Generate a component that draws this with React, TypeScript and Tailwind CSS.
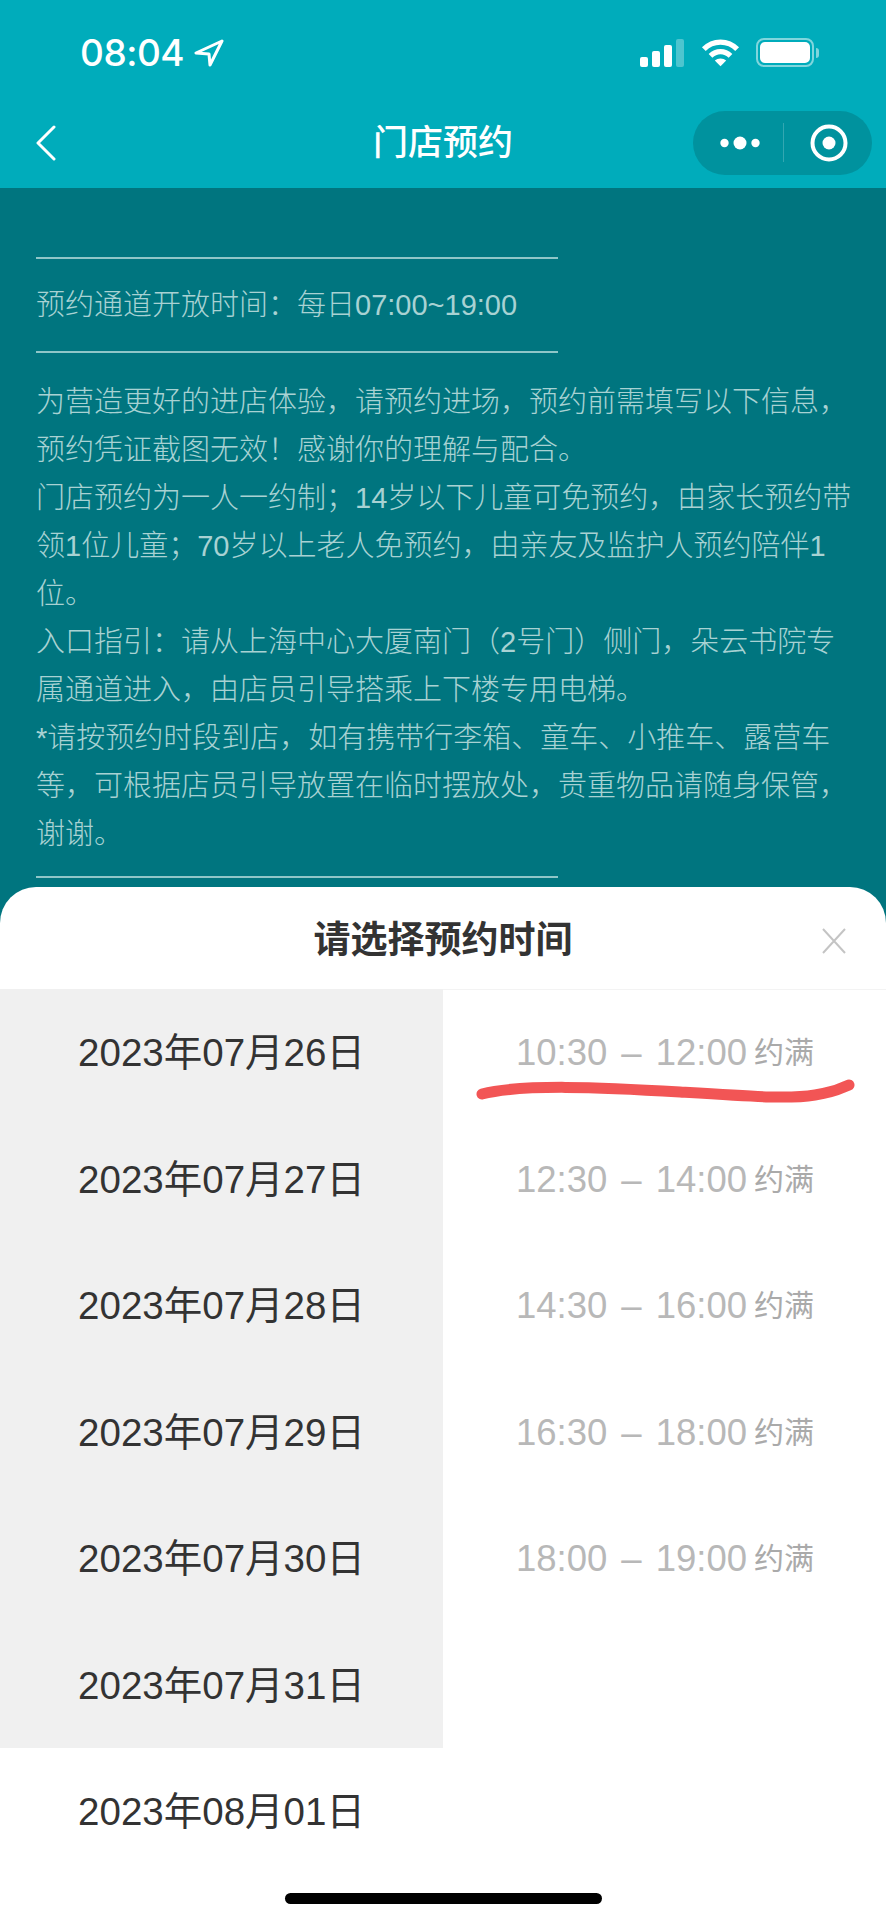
const NOTICE = [
  "为营造更好的进店体验，请预约进场，预约前需填写以下信息，",
  "预约凭证截图无效！感谢你的理解与配合。",
  "门店预约为一人一约制；14岁以下儿童可免预约，由家长预约带",
  "领1位儿童；70岁以上老人免预约，由亲友及监护人预约陪伴1",
  "位。",
  "入口指引：请从上海中心大厦南门（2号门）侧门，朵云书院专",
  "属通道进入，由店员引导搭乘上下楼专用电梯。",
  "*请按预约时段到店，如有携带行李箱、童车、小推车、露营车",
  "等，可根据店员引导放置在临时摆放处，贵重物品请随身保管，",
  "谢谢。",
];

const DATES = [
  "2023年07月26日",
  "2023年07月27日",
  "2023年07月28日",
  "2023年07月29日",
  "2023年07月30日",
  "2023年07月31日",
  "2023年08月01日",
];

const SLOTS = [
  ["10:30", "12:00"],
  ["12:30", "14:00"],
  ["14:30", "16:00"],
  ["16:30", "18:00"],
  ["18:00", "19:00"],
];

function StatusBar() {
  return (
    <div className="flex h-[105px] items-center justify-between pl-[80px] pr-[67px]">
      <div className="flex items-center gap-[10px]">
        <span className="font-['Inter',sans-serif] text-[37px] font-medium leading-none tracking-[-0.5px] text-white">
          08:04
        </span>
        <svg width="30" height="28" viewBox="0 0 30 28" fill="none" stroke="#fff" strokeWidth="3" strokeLinejoin="round">
          <path d="M28 2 2 14l13 1 1 11z" />
        </svg>
      </div>
      <div className="flex items-center gap-[16px]">
        <div className="mr-[1px] flex h-[28px] items-end gap-[4px]">
          <span className="h-[10px] w-[8px] rounded-[2px] bg-white" />
          <span className="h-[16px] w-[8px] rounded-[2px] bg-white" />
          <span className="h-[22px] w-[8px] rounded-[2px] bg-white" />
          <span className="h-[28px] w-[8px] rounded-[2px] bg-white/30" />
        </div>
        <svg width="39" height="29" viewBox="0 0 41 30" fill="none" stroke="#fff" strokeWidth="5.5">
          <path d="M3 11.5C12.5 1.5 28.5 1.5 38 11.5" />
          <path d="M10 18.5c6-6 15-6 21 0" />
          <path d="M20.5 29.5 14.5 23.5c3.3-3 8.7-3 12 0z" fill="#fff" stroke="none" />
        </svg>
        <div className="flex items-center gap-[2px]">
          <div className="flex h-[29px] w-[58px] items-center rounded-[8px] border-[2px] border-white/50 p-[2px]">
            <span className="h-full w-full rounded-[5px] bg-white" />
          </div>
          <span className="h-[10px] w-[3px] rounded-r-full bg-white/50" />
        </div>
      </div>
    </div>
  );
}

function NavBar() {
  return (
    <div className="relative flex h-[75px] items-center justify-between pl-[35px] pr-[14px]">
      <svg width="22" height="36" viewBox="0 0 22 36" fill="none" stroke="#fff" strokeWidth="3" strokeLinecap="round" strokeLinejoin="round">
        <path d="M19 2 3 18l16 16" />
      </svg>
      <span className="absolute inset-x-0 text-center text-[35px] font-medium leading-none text-white">
        门店预约
      </span>
      <div className="flex h-[64px] w-[179px] items-center rounded-full bg-[#00929e]">
        <svg className="ml-[27px]" width="40" height="16" viewBox="0 0 40 16" fill="#fff">
          <circle cx="4.5" cy="8" r="4.2" />
          <circle cx="20" cy="8" r="6.5" />
          <circle cx="35.5" cy="8" r="4.2" />
        </svg>
        <span className="ml-[23px] h-[39px] w-px bg-white/20" />
        <svg className="ml-[26px]" width="38" height="38" viewBox="0 0 38 38" fill="none">
          <circle cx="19" cy="19" r="16.5" stroke="#fff" strokeWidth="4" />
          <circle cx="19" cy="19" r="6.5" fill="#fff" />
        </svg>
      </div>
    </div>
  );
}

function Rule() {
  return <div className="h-[2px] w-[522px] bg-[#8fc6c8]" />;
}

export default function App() {
  return (
    <div className="relative flex h-[1920px] w-[886px] flex-col overflow-hidden bg-[#00757f] font-['Liberation_Sans','Noto_Sans_CJK_SC',sans-serif]">
      <header className="bg-[#00acbb] pb-[8px]">
        <StatusBar />
        <NavBar />
      </header>

      <main className="h-[699px] shrink-0 overflow-hidden pl-[36px] pt-[69px] text-[29px] font-light leading-[48px] text-[#a8d2d3]">
        <Rule />
        <p className="my-[22px]">预约通道开放时间：每日07:00~19:00</p>
        <Rule />
        <div className="mb-[18px] mt-[25px] whitespace-nowrap">
          {NOTICE.map((line) => (
            <p key={line}>{line}</p>
          ))}
        </div>
        <Rule />
      </main>

      {/* Bottom sheet */}
      <section className="flex flex-1 flex-col rounded-t-[36px] bg-white">
        <div className="relative flex h-[102px] items-center justify-center pt-[4px]">
          <h2 className="text-[37px] font-bold leading-none text-[#333]">请选择预约时间</h2>
          <svg className="absolute right-[39px] top-[41px]" width="26" height="26" viewBox="0 0 26 26" fill="none" stroke="#c4c4c4" strokeWidth="2">
            <path d="M2 1l22 24M24 1 2 25" />
          </svg>
        </div>
        <div className="flex">
          <div className="w-[443px]">
            {DATES.map((date, i) => (
              <div
                key={date}
                className={
                  i < 6
                    ? "flex h-[126.5px] items-center justify-center bg-[#f0f0f0] pt-[2px] text-[38.5px] leading-none text-[#333]"
                    : "flex h-[126.5px] items-center justify-center pt-[2px] text-[38.5px] leading-none text-[#333]"
                }
              >
                {date}
              </div>
            ))}
          </div>
          <div className="flex-1 border-t border-[#f3f3f3]">
            {SLOTS.map(([from, to]) => (
              <div key={from} className="flex h-[126.5px] items-center pl-[73px] leading-none text-[#b8b8b8]">
                <span className="flex w-[238px] gap-[14px] text-[36.5px]">
                  <span>{from}</span>
                  <span>–</span>
                  <span>{to}</span>
                </span>
                <span className="text-[30px] text-[#aaa]">约满</span>
              </div>
            ))}
          </div>
        </div>
      </section>

      {/* Hand-drawn marker over the first slot */}
      <svg className="absolute left-0 top-0" width="886" height="1920" fill="none">
        <path
          d="M482 1094C520 1084 600 1087 680 1092S790 1099 815 1095 840 1088 849 1085"
          stroke="#f25555"
          strokeWidth="11"
          strokeLinecap="round"
        />
      </svg>

      <div className="absolute bottom-[16px] left-[285px] h-[11px] w-[317px] rounded-full bg-black" />
    </div>
  );
}
